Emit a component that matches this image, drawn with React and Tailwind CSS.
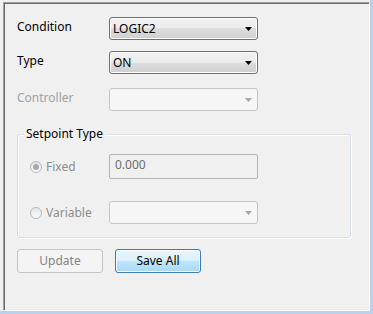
import React from "react";

const font = { fontFamily: '"Noto Sans", "Open Sans", sans-serif' };

function Arrow({ disabled }) {
  return (
    <svg width="7" height="4" viewBox="0 0 7 4" className="shrink-0">
      <path d="M0 0 H7 L3.5 4 Z" fill={disabled ? "#a6a6a6" : "#000"} />
    </svg>
  );
}

function Dropdown({ value, disabled }) {
  if (disabled) {
    return (
      <div className="w-[149px] h-[23px] rounded-[3px] border border-[#c2c5c8] bg-[#f6f6f6] flex items-center justify-end pr-[5px]">
        <Arrow disabled />
      </div>
    );
  }
  return (
    <div className="w-[149px] h-[23px] rounded-[3px] border border-[#707070] bg-[linear-gradient(#f2f2f2_0%,#ebebeb_50%,#dddddd_50%,#cfcfcf_100%)] shadow-[inset_0_0_0_1px_#fcfcfc] flex items-center justify-between pl-[3px] pr-[5px]">
      <span className="text-[12px] text-black leading-none">{value}</span>
      <Arrow />
    </div>
  );
}

function Radio({ checked }) {
  return (
    <div className="w-[12px] h-[12px] rounded-full border border-[#b5b5b5] bg-[linear-gradient(#e6e6e6,#fafafa)] flex items-center justify-center">
      {checked && <div className="w-[6px] h-[6px] rounded-full bg-[#a8a8a8]" />}
    </div>
  );
}

export default function App() {
  return (
    <div className="w-[373px] h-[314px] bg-[#b9d1ea]" style={font}>
      <div className="w-[370px] h-[311px] bg-[#f0f0f0] pl-[3px] pt-[2px]">
        <div className="w-[367px] h-[309px] border border-t-[#a0a0a0] border-l-[#a0a0a0] border-r-white border-b-white shadow-[inset_1px_1px_0_#696969] pl-[13px] pt-[14px]">
          <div className="flex items-start h-[23px]">
            <div className="w-[92px] text-[12px] text-black pt-[1px]">Condition</div>
            <Dropdown value="LOGIC2" />
          </div>
          <div className="flex items-start h-[23px] mt-[11px]">
            <div className="w-[92px] text-[12px] text-black pt-[1px]">Type</div>
            <Dropdown value="ON" />
          </div>
          <div className="flex items-start h-[23px] mt-[14px]">
            <div className="w-[92px] text-[12px] text-[#a0a0a0] pt-[1px]">Controller</div>
            <Dropdown disabled />
          </div>

          <div className="relative mt-[23px] w-[334px] h-[104px] rounded-[3px] border border-[#d5dfe5] shadow-[inset_1px_1px_0_#fff,1px_1px_0_#fff] pt-[19px]">
            <div className="absolute -top-[10px] left-[6px] px-[2px] bg-[#f0f0f0] text-[12px] text-black">
              Setpoint Type
            </div>
            <div className="flex items-center">
              <div className="w-[91px] flex items-center pl-[12px] gap-[4px] text-[12px] text-[#8d8d8d]">
                <Radio checked />
                <span>Fixed</span>
              </div>
              <div className="w-[149px] h-[25px] rounded-[2px] border border-[#b4b4b4] bg-[#f0f0f0] text-[12px] text-[#6d6d6d] pl-[5px] pt-[1px]">
                0.000
              </div>
            </div>
            <div className="flex items-center mt-[22px]">
              <div className="w-[91px] flex items-center pl-[12px] gap-[4px] text-[12px] text-[#8d8d8d]">
                <Radio />
                <span>Variable</span>
              </div>
              <Dropdown disabled />
            </div>
          </div>

          <div className="flex mt-[11px] gap-[12px]">
            <div className="w-[86px] h-[24px] rounded-[3px] border border-[#c2c5c8] bg-[#f4f4f4] flex items-center justify-center text-[12px] text-[#838383]">
              Update
            </div>
            <div className="w-[86px] h-[24px] rounded-[3px] border border-[#3c7fb1] bg-[linear-gradient(#eaf6fd_0%,#d9f0fc_50%,#bee6fd_50%,#a7d9f5_100%)] shadow-[inset_0_0_0_1px_#f4fbfe] flex items-center justify-center text-[12px] text-black">
              Save All
            </div>
          </div>
        </div>
      </div>
    </div>
  );
}
